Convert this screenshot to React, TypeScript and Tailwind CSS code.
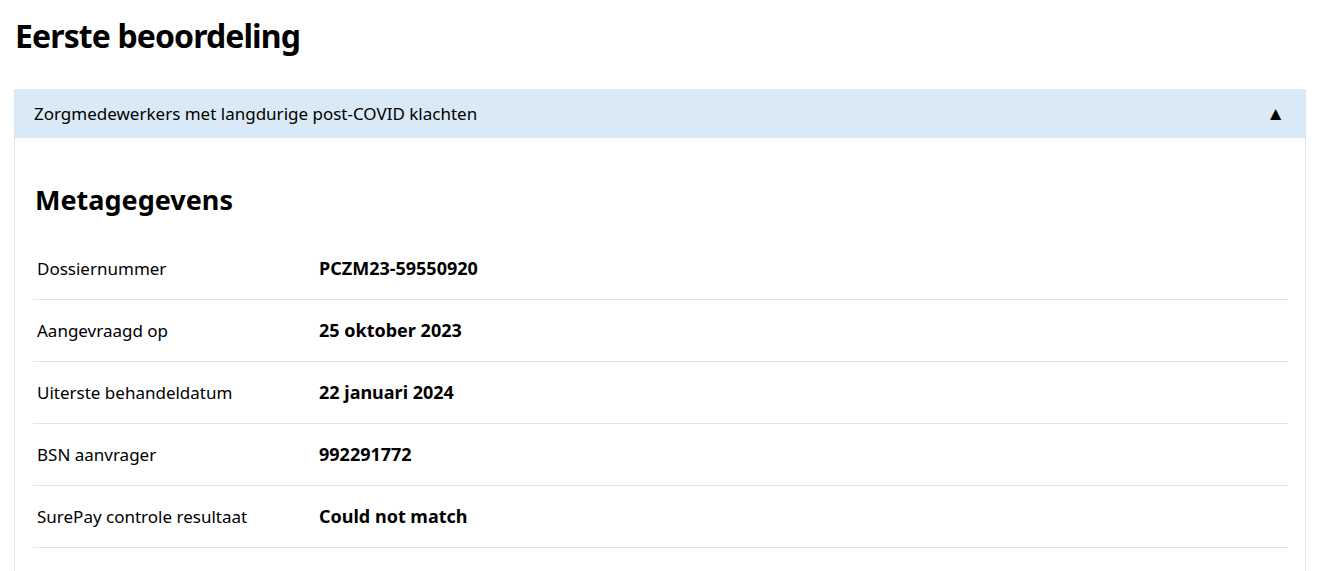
import { useState } from "react"

const rows = [
  { label: "Dossiernummer", value: "PCZM23-59550920" },
  { label: "Aangevraagd op", value: "25 oktober 2023" },
  { label: "Uiterste behandeldatum", value: "22 januari 2024" },
  { label: "BSN aanvrager", value: "992291772" },
  { label: "SurePay controle resultaat", value: "Could not match" },
]

export default function App() {
  const [open, setOpen] = useState(true)

  return (
    <div className="min-h-screen bg-white text-black font-['Noto_Sans',sans-serif]">
      <div className="pl-[14px] pr-[26px] pt-[14px]">
        <h1 className="text-[32px] font-bold leading-[44px] tracking-[-0.9px] pl-px mb-[31px]">Eerste beoordeling</h1>

        {/* ACCORDION */}
        <div>
          <button
            onClick={() => setOpen(!open)}
            className="w-full h-[49px] flex items-center justify-between bg-[#d9eaf6] pl-[20px] pr-[21px] text-left"
          >
            <span className="text-[17px] leading-none">Zorgmedewerkers met langdurige post-COVID klachten</span>
            <span className="text-[19px] leading-none">{open ? "▲" : "▼"}</span>
          </button>

          {open && (
            <div className="border-x border-[#e4e4e4] pl-[18px] pr-[17px] pt-[44px] pb-[24px]">
              <h2 className="text-[27px] font-bold leading-[36px] pl-[2px] mb-[20px]">Metagegevens</h2>
              <div>
                {rows.map((row) => (
                  <div key={row.label} className="flex items-center h-[62px] border-b border-[#e4e4e4]">
                    <div className="w-[286px] pl-[4px] text-[17px]">{row.label}</div>
                    <div className="font-bold text-[18px]">{row.value}</div>
                  </div>
                ))}
              </div>
            </div>
          )}
        </div>
      </div>
    </div>
  )
}
